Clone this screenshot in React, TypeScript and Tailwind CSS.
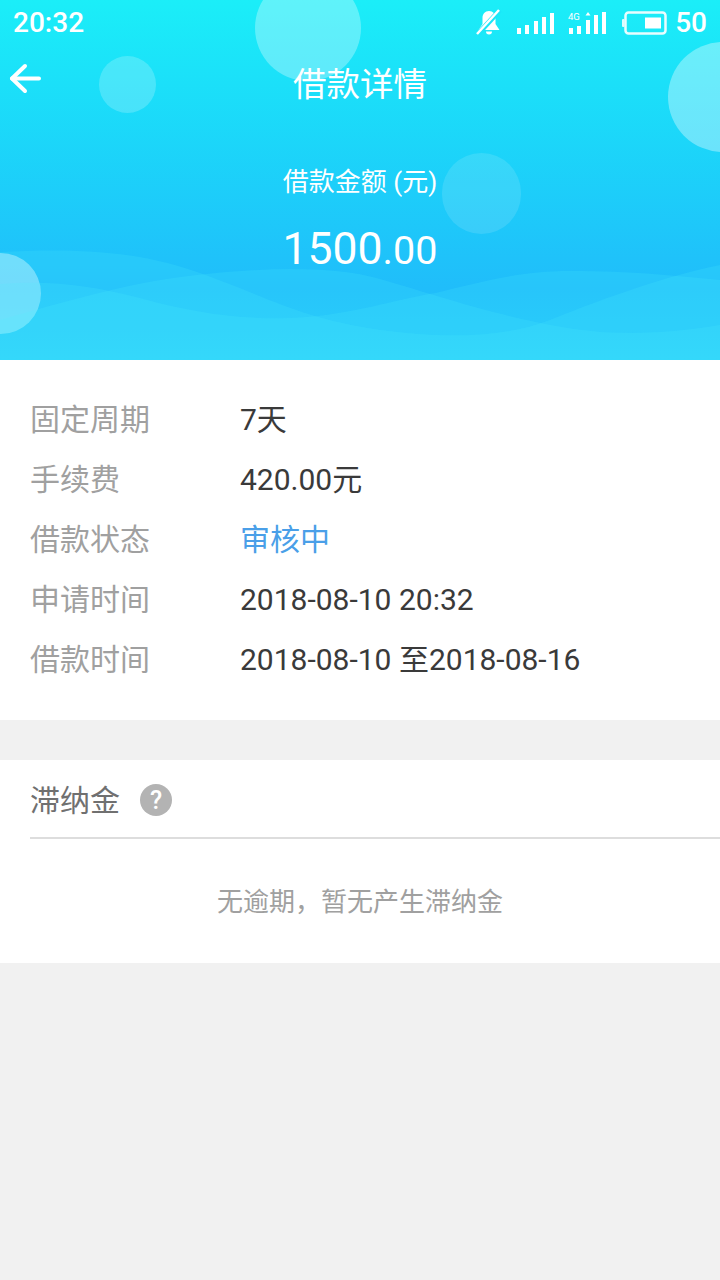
const rows = [
  { label: "固定周期", value: "7天" },
  { label: "手续费", value: "420.00元" },
  { label: "借款状态", value: "审核中", accent: true },
  { label: "申请时间", value: "2018-08-10 20:32" },
  { label: "借款时间", value: "2018-08-10 至2018-08-16" },
];

function Bell() {
  return (
    <svg width="26" height="26" viewBox="0 0 26 26" fill="white">
      <path d="M13 2c-4 0-6.500 3-6.500 7v6L2.500 21h21L19.500 15V9C19.500 5 17 2 13 2z" />
      <path d="M10 22.500h6a3 3 0 0 1-6 0z" />
      <path d="M2 25L24 1" stroke="#1be6f8" strokeWidth="5" />
      <path d="M1 25L23 1" stroke="white" strokeWidth="2.500" />
    </svg>
  );
}

function Signal() {
  const bars = [
    [1, 6],
    [9, 9],
    [18, 13],
    [26, 17],
    [34, 21],
  ];
  return (
    <svg width="38" height="22" viewBox="0 0 38 22" fill="white">
      {bars.map(([x, h]) => (
        <rect key={x} x={x} y={22 - h} width="4" height={h} />
      ))}
    </svg>
  );
}

function Signal4G() {
  const bars = [
    [1, 6],
    [9, 8],
    [18, 14],
    [26, 19],
    [34, 22],
  ];
  return (
    <svg width="38" height="22" viewBox="0 0 38 22" fill="white">
      {bars.map(([x, h]) => (
        <rect key={x} x={x} y={22 - h} width="4" height={h} />
      ))}
      <text x="0" y="7.500" fontSize="9.500" fontFamily="Roboto, sans-serif" fill="white">
        4G
      </text>
      <path d="M20 0L22.500 3.500H17.500z" />
    </svg>
  );
}

function Battery() {
  return (
    <svg width="45" height="24" viewBox="0 0 45 24" fill="none">
      <rect x="0" y="8" width="2.500" height="8" rx="1" fill="white" opacity="0.85" />
      <rect x="3.500" y="1.500" width="40" height="21" rx="3" stroke="white" strokeOpacity="0.9" strokeWidth="2.500" />
      <rect x="23" y="6.500" width="16" height="11" fill="white" />
    </svg>
  );
}

function BackArrow() {
  return (
    <svg width="34" height="32" viewBox="0 0 34 32" fill="none" stroke="white" strokeWidth="4" strokeLinecap="round" strokeLinejoin="round">
      <path d="M31 15.500H4" />
      <path d="M17 3L4 15.500L17 28" />
    </svg>
  );
}

// drawn in page coords, top of the header = 0
function Waves() {
  return (
    <svg className="absolute top-0 left-0" width="720" height="360" viewBox="0 0 720 360" fill="#50f5ff">
      <path
        opacity="0.16"
        d="M0 252C60 249 130 248 197 272C270 298 300 318 380 330C430 337 500 340 550 320C610 296 670 275 720 265V360H0z"
      />
      <path
        opacity="0.16"
        d="M0 320C60 303 130 282 197 275C260 268 330 265 380 279C430 293 520 325 600 332C650 335 690 330 720 325V360H0z"
      />
      <path
        opacity="0.16"
        d="M0 284C50 280 90 285 140 298C190 312 240 320 290 318C350 316 400 298 436 293C480 282 520 271 570 271C630 271 680 276 720 280V360H0z"
      />
    </svg>
  );
}

export default function App() {
  return (
    <div className="w-[720px] h-[1280px] bg-[#f1f1f1] overflow-hidden font-['Roboto','Noto_Sans_CJK_SC',sans-serif]">
      {/* header */}
      <div className="relative h-[360px] overflow-hidden bg-gradient-to-b from-[#1beef8] via-[#20bdfa] via-[80%] to-[#22c6fa] text-white">
        <div className="absolute left-[255px] -top-[25px] w-[106px] h-[106px] rounded-full bg-white/30" />
        <div className="absolute left-[99px] top-[56px] w-[57px] h-[57px] rounded-full bg-white/20" />
        <div className="absolute left-[668px] top-[42px] w-[110px] h-[110px] rounded-full bg-white/35" />
        <div className="absolute left-[442px] top-[153px] w-[79px] h-[81px] rounded-full bg-white/12" />
        <div className="absolute -left-[40px] top-[253px] w-[81px] h-[81px] rounded-full bg-white/40" />
        <Waves />

        <div className="relative">
          {/* status bar */}
          <div className="flex items-center h-[46px] px-[13px]">
            <span className="text-[28px] font-medium leading-none">20:32</span>
            <div className="ml-auto flex items-center">
              <div className="-mt-[3px]">
                <Bell />
              </div>
              <div className="ml-[14px] -mt-[1px]">
                <Signal />
              </div>
              <div className="ml-[14px] -mt-[1px]">
                <Signal4G />
              </div>
              <div className="ml-[16px] -mt-[1px]">
                <Battery />
              </div>
              <span className="ml-[8px] text-[28px] font-medium leading-none">50</span>
            </div>
          </div>

          {/* nav */}
          <div className="relative flex items-center justify-center h-[76px] pt-[2px]">
            <div className="absolute left-[8px] top-[17px]">
              <BackArrow />
            </div>
            <span className="text-[33.500px] leading-none">借款详情</span>
          </div>

          <div className="mt-[47px] text-center text-[26px] leading-none">借款金额 (元)</div>
          <div className="mt-[32px] text-center leading-none">
            <span className="text-[44.500px]">1500</span>
            <span className="text-[39.500px]">.00</span>
          </div>
        </div>
      </div>

      {/* detail */}
      <div className="bg-white h-[360px] pt-[29px]">
        {rows.map((r) => (
          <div key={r.label} className="flex items-center h-[60px] pl-[30px] text-[30px]">
            <span className="w-[210px] text-[#a0a0a0]">{r.label}</span>
            <span className={r.accent ? "text-[#4a9fe8]" : "text-[#3a3a3a]"}>{r.value}</span>
          </div>
        ))}
      </div>

      {/* late fee */}
      <div className="mt-[40px] bg-white h-[203px]">
        <div className="ml-[30px] h-[79px] pt-[3px] border-b-2 border-[#dddddd] flex items-center">
          <span className="text-[30px] text-[#707070]">滞纳金</span>
          <span className="ml-[20px] w-[32px] h-[32px] rounded-full bg-[#b3b3b3] text-white text-[25px] font-medium flex items-center justify-center leading-none">
            ?
          </span>
        </div>
        <div className="mt-[50px] text-center text-[26px] leading-none text-[#a0a0a0]">无逾期，暂无产生滞纳金</div>
      </div>
    </div>
  );
}
